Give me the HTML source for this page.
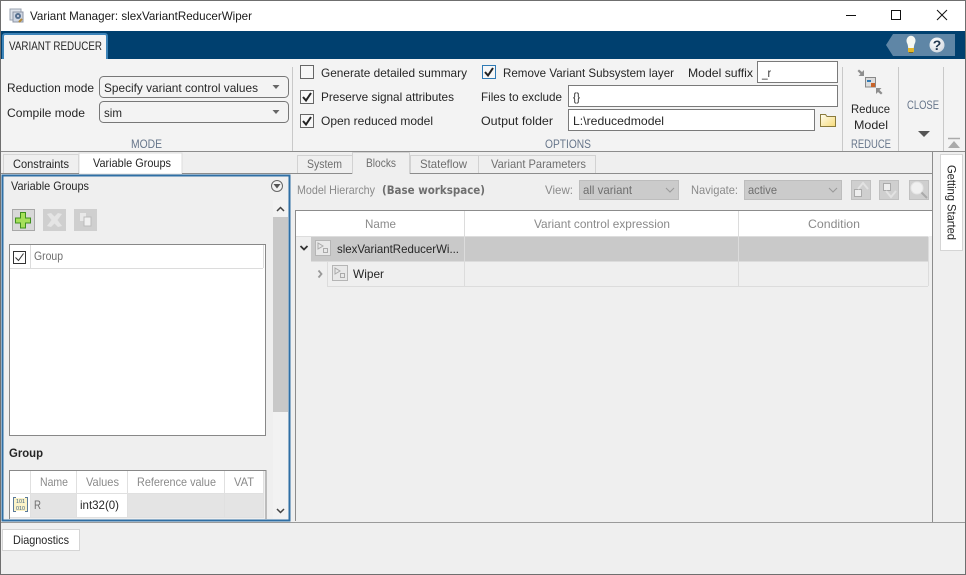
<!DOCTYPE html>
<html><head><meta charset="utf-8"><title>Variant Manager</title>
<style>
html,body{margin:0;padding:0;width:966px;height:575px;overflow:hidden;background:#efefef}
svg{display:block}
text{font-family:"Liberation Sans",sans-serif;font-size:12px;fill:#262626}
.g{fill:#8a8a8a}.m{fill:#6e6e6e}.s{fill:#66758a}
</style></head><body>
<svg width="966" height="575" viewBox="0 0 966 575" xmlns="http://www.w3.org/2000/svg">
<defs>
<g id="cm"><path d="M3 7l3 3.500L11 3" fill="none" stroke="#222" stroke-width="2"/></g>
<g id="blk"><rect x=".5" y=".5" width="15" height="15" fill="#e8e8e8" stroke="#b5b5b5"/><path d="M3 3v6l5-3z" fill="none" stroke="#aaa"/><rect x="8.500" y="8.500" width="4" height="4" fill="none" stroke="#aaa"/></g>
<linearGradient id="fold" x1="0" y1="0" x2="1" y2="1"><stop offset="0" stop-color="#fffdf0"/><stop offset="1" stop-color="#f6da78"/></linearGradient>
<radialGradient id="help" cx=".4" cy=".3" r=".8"><stop offset="0" stop-color="#fff"/><stop offset="1" stop-color="#cfd6dd"/></radialGradient>
</defs>
<rect width="966" height="575" fill="#efefef"/>
<!-- title bar -->
<rect width="966" height="31" fill="#fff"/>
<rect x="10" y="9" width="11" height="11" fill="#dfe3ea" stroke="#9aa3b0"/>
<rect x="13" y="12" width="10" height="10" fill="#cfd6e2" stroke="#8c95a6"/>
<circle cx="18" cy="16" r="3" fill="#56708f"/><circle cx="18" cy="16" r="1" fill="#dde"/>
<path d="M22 19l-3 3" stroke="#b58a3a" stroke-width="2"/>
<text x="30" y="20" textLength="222" lengthAdjust="spacingAndGlyphs" style="fill:#1a1a1a">Variant Manager: slexVariantReducerWiper</text>
<path d="M846 15.500h10" stroke="#111" stroke-width="1"/>
<rect x="891.500" y="10.500" width="9" height="9" fill="none" stroke="#111"/>
<path d="M937 10l10 10M947 10l-10 10" stroke="#111" stroke-width="1"/>
<!-- blue band -->
<rect y="31" width="966" height="28" fill="#00406f"/>
<path d="M4 36a2 2 0 0 1 2-2h99a2 2 0 0 1 2 2v23H4z" fill="#f3f3f3"/>
<path d="M3 59V36a2 2 0 0 1 2-2h100a2 2 0 0 1 2 2v23" fill="none" stroke="#3c83b8" stroke-width="2"/>
<text x="9" y="50" textLength="93" lengthAdjust="spacingAndGlyphs">VARIANT REDUCER</text>
<path d="M886 45l7-11h62v22h-62z" fill="#5f86a6"/>
<path d="M907 43a4.500 5 0 1 1 8 0c-.8 1.500-1 3-1.200 5h-5.600c-.2-2-.4-3.500-1.200-5z" fill="#f6f8f2"/>
<rect x="908" y="48" width="6" height="4" fill="#e2b62a"/><rect x="909" y="52" width="4" height="1" fill="#7a6620"/>
<circle cx="937" cy="45" r="7.500" fill="url(#help)"/>
<text x="932.800" y="50" style="font-size:14px;font-weight:bold;fill:#22384f">?</text>
<!-- ribbon -->
<rect y="59" width="966" height="92" fill="#f3f3f3"/>
<path d="M0 151.500h966" stroke="#8c8c8c"/>
<path d="M292.500 67v84M842.500 67v84M898.500 67v84M943.500 67v84" stroke="#c9c9c9"/>
<text x="7" y="92" textLength="87" lengthAdjust="spacingAndGlyphs">Reduction mode</text>
<text x="7" y="117" textLength="78" lengthAdjust="spacingAndGlyphs">Compile mode</text>
<rect x="99.500" y="76.500" width="189" height="21" rx="4" fill="#f3f3f3" stroke="#777"/>
<rect x="99.500" y="101.500" width="189" height="21" rx="4" fill="#f3f3f3" stroke="#777"/>
<text x="104" y="92" textLength="154" lengthAdjust="spacingAndGlyphs">Specify variant control values</text>
<text x="104" y="117" textLength="18" lengthAdjust="spacingAndGlyphs">sim</text>
<path d="M272.500 85h7l-3.500 4zM272.500 110h7l-3.500 4z" fill="#666"/>
<text class="s" x="131" y="148" textLength="31" lengthAdjust="spacingAndGlyphs">MODE</text>
<!-- options -->
<rect x="300.500" y="65.500" width="13" height="13" fill="#f7f7f7" stroke="#666"/>
<rect x="300.500" y="90.500" width="13" height="13" fill="#f7f7f7" stroke="#666"/>
<rect x="300.500" y="114.500" width="13" height="13" fill="#f7f7f7" stroke="#666"/>
<rect x="482.500" y="65.500" width="13" height="13" fill="#f7f7f7" stroke="#2f7ab5"/>
<use href="#cm" x="300" y="90"/><use href="#cm" x="300" y="114"/><use href="#cm" x="482" y="65"/>
<text x="321" y="77" textLength="146" lengthAdjust="spacingAndGlyphs">Generate detailed summary</text>
<text x="321" y="101" textLength="133" lengthAdjust="spacingAndGlyphs">Preserve signal attributes</text>
<text x="321" y="125" textLength="112" lengthAdjust="spacingAndGlyphs">Open reduced model</text>
<text x="503" y="77" textLength="171" lengthAdjust="spacingAndGlyphs">Remove Variant Subsystem layer</text>
<text x="688" y="77" textLength="65" lengthAdjust="spacingAndGlyphs">Model suffix</text>
<text x="481" y="101" textLength="81" lengthAdjust="spacingAndGlyphs">Files to exclude</text>
<text x="481" y="125" textLength="72" lengthAdjust="spacingAndGlyphs">Output folder</text>
<rect x="757.500" y="61.500" width="80" height="21" fill="#fff" stroke="#7a7a7a"/>
<rect x="568.500" y="85.500" width="269" height="21" fill="#fff" stroke="#7a7a7a"/>
<rect x="568.500" y="109.500" width="246" height="21" fill="#fff" stroke="#7a7a7a"/>
<text x="762" y="77" textLength="9" lengthAdjust="spacingAndGlyphs">_r</text>
<text x="573" y="101" textLength="7" lengthAdjust="spacingAndGlyphs">{}</text>
<text x="573" y="125" textLength="91" lengthAdjust="spacingAndGlyphs">L:\reducedmodel</text>
<path d="M820.500 126.500v-12h5l1.500 2h8.500v10z" fill="url(#fold)" stroke="#8a7a3c"/>
<text class="s" x="545" y="148" textLength="46" lengthAdjust="spacingAndGlyphs">OPTIONS</text>
<!-- reduce -->
<path d="M864 76v-6l-2 2-3-2.500-1.500 1.500 3 3-2 2z" fill="#8e8e8e"/>
<path d="M876 88v6l2-2 3 2.500 1.500-1.500-3-3 2-2z" fill="#8e8e8e"/>
<rect x="865.500" y="77.500" width="10" height="9.500" fill="#dcdcdc" stroke="#888"/>
<path d="M867 81h4" stroke="#2f7ab5" stroke-width="2"/><rect x="871" y="83" width="4" height="4" fill="#c8642a"/>
<text x="851" y="113" textLength="39" lengthAdjust="spacingAndGlyphs">Reduce</text>
<text x="854" y="129" textLength="34" lengthAdjust="spacingAndGlyphs">Model</text>
<text class="s" x="851" y="148" textLength="40" lengthAdjust="spacingAndGlyphs">REDUCE</text>
<text class="s" x="907" y="109" textLength="32" lengthAdjust="spacingAndGlyphs">CLOSE</text>
<path d="M918 131h12l-6 6z" fill="#555"/>
<path d="M948 138.500h12" stroke="#aaa" stroke-width="1.500"/><path d="M948 148h12l-6-7z" fill="#aaa"/>
<!-- left tabs -->
<rect x="3.500" y="154.500" width="75" height="19" fill="#efefef" stroke="#d5d5d5"/>
<rect x="79" y="153" width="103" height="21" fill="#fff" stroke="#dcdcdc"/>
<path d="M0 173.500h79M182 173.500h113" stroke="#8c8c8c"/>
<text x="13" y="168" textLength="56" lengthAdjust="spacingAndGlyphs">Constraints</text>
<text x="93" y="167" textLength="78" lengthAdjust="spacingAndGlyphs">Variable Groups</text>
<!-- left panel -->
<rect x="2.500" y="175.500" width="287" height="345" fill="#efefef" stroke="#2f6fa5" stroke-width="2"/>
<text x="11" y="190" textLength="78" lengthAdjust="spacingAndGlyphs">Variable Groups</text>
<circle cx="277" cy="186" r="5.500" fill="#f2f2f2" stroke="#666"/><path d="M273.500 184h7l-3.500 4.500z" fill="#555"/>
<rect x="273" y="200" width="15" height="319" fill="#f2f2f2"/>
<rect x="273" y="217" width="15" height="195" fill="#c8c8c8"/>
<path d="M277 211l3.500-3.500 3.500 3.500M277 509l3.500 3.500 3.500-3.500" fill="none" stroke="#444" stroke-width="1.500"/>
<rect x="12.500" y="209.500" width="22" height="21" fill="#d8d8d8" stroke="#a8a8a8"/>
<path d="M20.500 212.500h5v5.500h5v5h-5v5h-5v-5h-5v-5h5z" fill="#a6e05a" stroke="#3f8f1e"/>
<rect x="43" y="209" width="23" height="22" fill="#cfcfcf"/>
<path d="M47 214l4-1 3.500 3.500 3.500-3.500 4 1-4.500 6 4.500 6-4 1-3.500-3.500-3.500 3.500-4-1 4.500-6z" fill="#e4e4e4"/>
<rect x="74" y="209" width="23" height="22" fill="#cfcfcf"/>
<rect x="80" y="213" width="6" height="8" fill="#e8e8e8"/><rect x="84" y="217" width="7" height="9" fill="#f0f0f0" stroke="#bbb"/>
<!-- list -->
<rect x="9.500" y="244.500" width="256" height="191" fill="#fff" stroke="#888"/>
<path d="M10 268.500h253M30.500 245v23M263.500 245v23" stroke="#dcdcdc"/>
<rect x="13.500" y="251.500" width="12" height="12" fill="#fff" stroke="#333"/>
<path d="M15.500 257.500l3 3 5-7" fill="none" stroke="#333"/>
<text class="m" x="34" y="260" textLength="29" lengthAdjust="spacingAndGlyphs">Group</text>
<text x="9" y="457" textLength="34" lengthAdjust="spacingAndGlyphs" style="font-weight:bold">Group</text>
<!-- group table -->
<rect x="10" y="471" width="256" height="47" fill="#fff"/>
<rect x="30" y="494" width="233" height="23" fill="#e4e4e4"/>
<rect x="77" y="494" width="50" height="23" fill="#fff"/>
<rect x="264" y="471" width="2" height="48" fill="#efefef"/>
<rect x="10" y="518" width="256" height="1" fill="#efefef"/>
<path d="M30.500 471v47M76.500 471v47M127.500 471v47M224.500 471v47M263.500 471v47M10 493.500h253M10 517.500h253" stroke="#e0e0e0"/>
<path d="M9.500 519V470.500h256.500V519" fill="none" stroke="#888"/>
<text class="g" x="40" y="486" textLength="28" lengthAdjust="spacingAndGlyphs">Name</text>
<text class="g" x="86" y="486" textLength="33" lengthAdjust="spacingAndGlyphs">Values</text>
<text class="g" x="137" y="486" textLength="79" lengthAdjust="spacingAndGlyphs">Reference value</text>
<text class="g" x="234" y="486" textLength="20" lengthAdjust="spacingAndGlyphs">VAT</text>
<text class="m" x="34" y="509" textLength="7" lengthAdjust="spacingAndGlyphs">R</text>
<text x="80" y="509" textLength="39" lengthAdjust="spacingAndGlyphs">int32(0)</text>
<rect x="14" y="498" width="13" height="13" fill="#fbf3c8"/>
<path d="M16 497.500h-2.500v14H16M25 497.500h2.500v14H25" fill="none" stroke="#5a7a9a"/>
<text x="16" y="503" style="font-size:5px;fill:#3f6384" textLength="9" lengthAdjust="spacingAndGlyphs">101</text>
<text x="16" y="510" style="font-size:5px;fill:#3f6384" textLength="9" lengthAdjust="spacingAndGlyphs">010</text>
<!-- separators / bottom -->
<path d="M0 522.500h966" stroke="#9a9a9a"/>
<rect x="2.500" y="529.500" width="77" height="21" fill="#fff" stroke="#d5d5d5"/>
<text x="13" y="544" textLength="56" lengthAdjust="spacingAndGlyphs">Diagnostics</text>
<!-- right tabs -->
<rect x="297.500" y="155.500" width="55" height="18" fill="#efefef" stroke="#d2d2d2"/>
<rect x="352.500" y="152.500" width="57" height="21" fill="#efefef" stroke="#d2d2d2"/>
<rect x="410.500" y="155.500" width="68" height="18" fill="#efefef" stroke="#d2d2d2"/>
<rect x="478.500" y="155.500" width="117" height="18" fill="#efefef" stroke="#d2d2d2"/>
<path d="M295 173.500h57M410 173.500h522" stroke="#8c8c8c"/>
<rect x="353" y="172" width="56" height="2" fill="#efefef"/>
<text class="m" x="307" y="168" textLength="35" lengthAdjust="spacingAndGlyphs">System</text>
<text class="m" x="366" y="167" textLength="30" lengthAdjust="spacingAndGlyphs">Blocks</text>
<text class="m" x="420" y="168" textLength="47" lengthAdjust="spacingAndGlyphs">Stateflow</text>
<text class="m" x="491" y="168" textLength="95" lengthAdjust="spacingAndGlyphs">Variant Parameters</text>
<text class="g" x="297" y="194" textLength="78" lengthAdjust="spacingAndGlyphs">Model Hierarchy</text>
<text class="m" x="382" y="194" textLength="103" lengthAdjust="spacingAndGlyphs" style="font-family:'DejaVu Sans',sans-serif;font-weight:bold;font-size:11.500px">(Base workspace)</text>
<text class="g" x="545" y="194" textLength="28" lengthAdjust="spacingAndGlyphs">View:</text>
<rect x="579.500" y="180.500" width="99" height="19" fill="#cbcbcb" stroke="#bdbdbd"/>
<text class="m" x="583" y="194" textLength="49" lengthAdjust="spacingAndGlyphs">all variant</text>
<path d="M666 188l4 4 4-4" fill="none" stroke="#999"/>
<text class="g" x="691" y="194" textLength="47" lengthAdjust="spacingAndGlyphs">Navigate:</text>
<rect x="744.500" y="180.500" width="97" height="19" fill="#cbcbcb" stroke="#bdbdbd"/>
<text class="m" x="748" y="194" textLength="29" lengthAdjust="spacingAndGlyphs">active</text>
<path d="M829 188l4 4 4-4" fill="none" stroke="#999"/>
<rect x="851.500" y="180.500" width="19" height="19" fill="#cfcfcf" stroke="#c0c0c0"/>
<rect x="854.500" y="189.500" width="7" height="7" fill="#eee" stroke="#aaa"/><path d="M858 189l5-6 5 6" fill="none" stroke="#e2e2e2" stroke-width="2"/>
<rect x="879.500" y="180.500" width="19" height="19" fill="#cfcfcf" stroke="#c0c0c0"/>
<rect x="883.500" y="183.500" width="7" height="7" fill="#eee" stroke="#aaa"/><path d="M886 191l5 6 5-6" fill="none" stroke="#e2e2e2" stroke-width="2"/>
<rect x="909.500" y="180.500" width="19" height="19" fill="#cfcfcf" stroke="#c0c0c0"/>
<circle cx="917" cy="188" r="6" fill="#f0f0f0" stroke="#e4e4e4"/><path d="M921.500 192.500l5.500 5.500" stroke="#aaa" stroke-width="2"/>
<!-- main table -->
<rect x="296" y="211" width="636" height="25" fill="#fff"/>
<path d="M295.500 521V210.500H932" fill="none" stroke="#8c8c8c"/>
<path d="M932.500 152v370" stroke="#8c8c8c"/>
<rect x="296" y="236" width="632" height="1" fill="#ddd"/>
<rect x="311" y="237" width="617" height="24" fill="#c9c9c9"/>
<path d="M464.500 211v75M738.500 211v75M327.500 262v24M928.500 237v49M327 286.500h601M311 261.500h617" stroke="#dcdcdc"/>
<text class="g" x="365" y="228" textLength="31" lengthAdjust="spacingAndGlyphs">Name</text>
<text class="g" x="534" y="228" textLength="136" lengthAdjust="spacingAndGlyphs">Variant control expression</text>
<text class="g" x="808" y="228" textLength="52" lengthAdjust="spacingAndGlyphs">Condition</text>
<path d="M300.500 246l3.500 3.500 3.500-3.500" fill="none" stroke="#333" stroke-width="1.800"/>
<path d="M318.500 270.500l3 3.500-3 3.500" fill="none" stroke="#999" stroke-width="1.800"/>
<use href="#blk" x="315" y="240"/>
<use href="#blk" x="332" y="265"/>
<text x="337" y="253" textLength="122" lengthAdjust="spacingAndGlyphs">slexVariantReducerWi...</text>
<text x="353" y="278" textLength="31" lengthAdjust="spacingAndGlyphs">Wiper</text>
<!-- getting started -->
<rect x="940.500" y="154.500" width="22" height="96" fill="#fff" stroke="#d5d5d5"/>
<text transform="translate(947.500 165) rotate(90)" x="0" y="0" textLength="75" lengthAdjust="spacingAndGlyphs">Getting Started</text>
<!-- window border -->
<rect x=".5" y=".5" width="965" height="574" fill="none" stroke="#6f6f6f"/>
</svg>
</body></html>
